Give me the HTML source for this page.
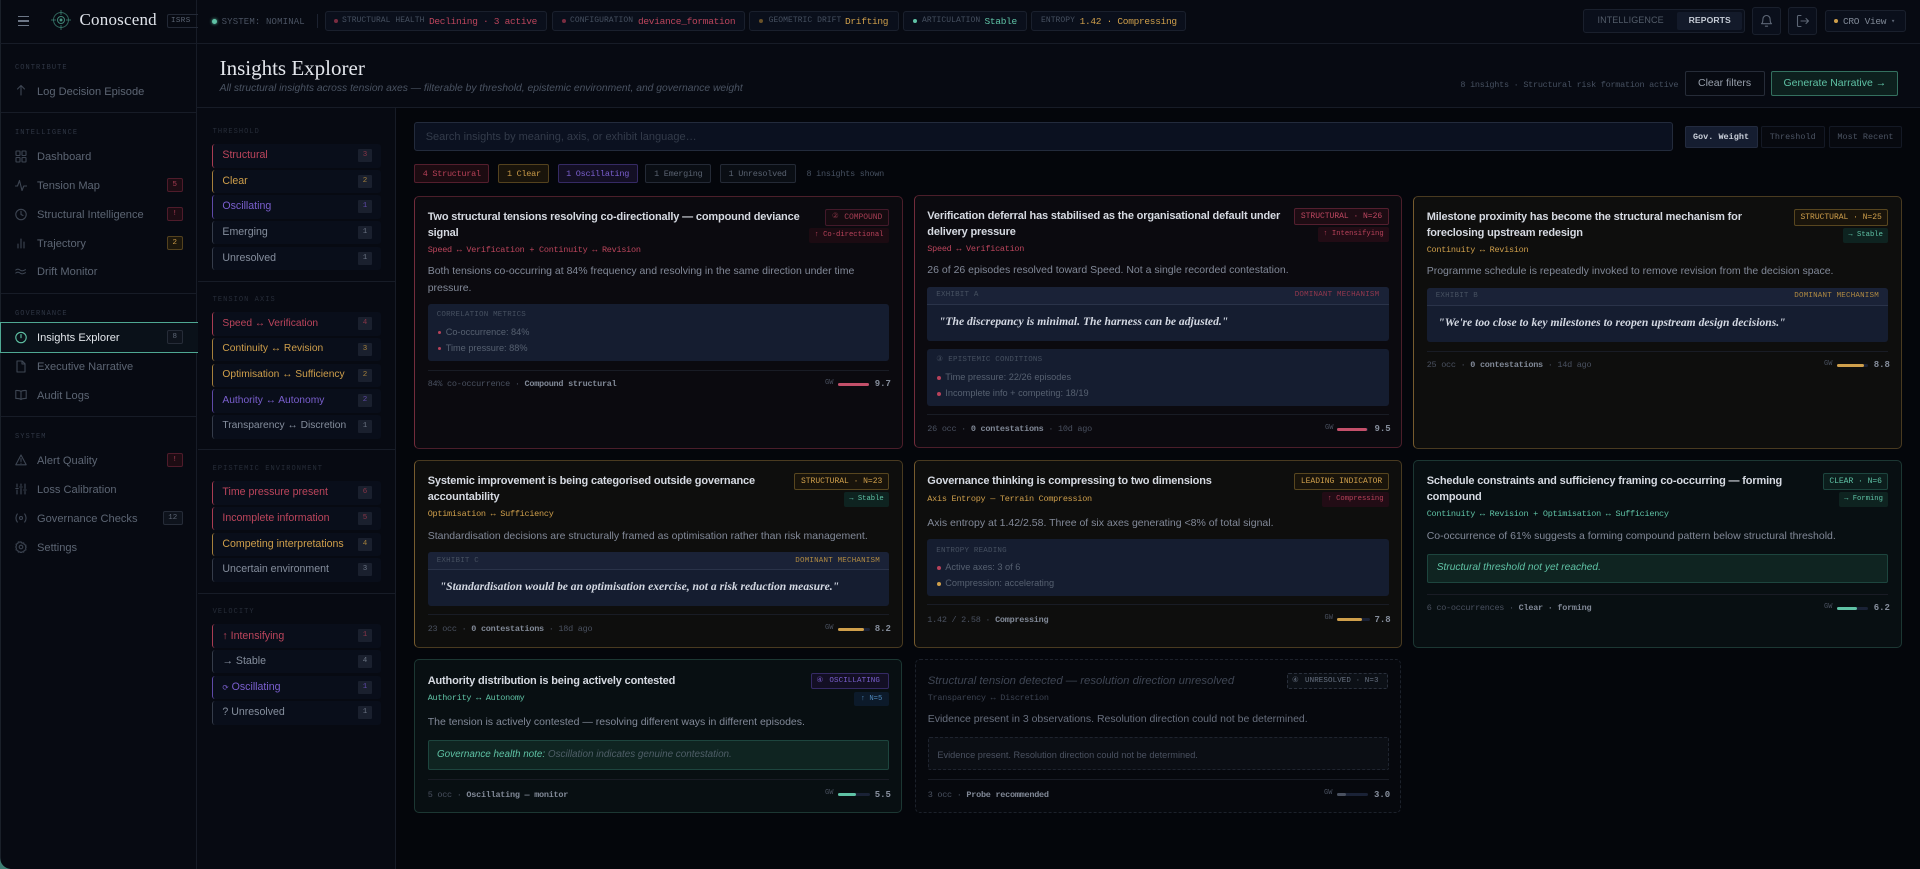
<!DOCTYPE html>
<html lang="en"><head><meta charset="utf-8"><title>Conoscend — Insights Explorer</title>
<style>
*{box-sizing:border-box;margin:0;padding:0}
html,body{width:1920px;height:869px;overflow:hidden;background:#04060b}
body{position:relative;font-family:"Liberation Sans",sans-serif;color:#8a93a3}
.b{position:absolute}
.t{position:absolute;line-height:0;white-space:nowrap}
.m{font-family:"Liberation Mono",monospace;font-size:8.5px;letter-spacing:-.26px;margin-top:1px}
.s{font-family:"Liberation Serif",serif}
.sec{font-family:"Liberation Mono",monospace;font-size:7px;letter-spacing:1.06px;color:#2f3644}
.nav{font-size:11.1px;color:#5c6573;left:37px;margin-top:.7px}
svg.i{position:absolute;fill:none;stroke:#3d4552;stroke-width:1.1;stroke-linecap:round;stroke-linejoin:round}
.nb{position:absolute;left:167px;width:15.5px;height:14px;border-radius:2px;font:7.5px/12px "Liberation Mono",monospace;text-align:center}
.nr{background:#1d0c13;border:1px solid #4f1c2b;color:#a83c52}
.na{background:#1c170c;border:1px solid #54421e;color:#c99a48}
.nn{background:#0e131c;border:1px solid #262c38;color:#5d6675}
.pill{position:absolute;top:11px;height:20px;background:#0a0f1b;border:1px solid #1a202d;border-radius:3px}
.dot{position:absolute;width:4px;height:4px;border-radius:50%}
.pl{font-family:"Liberation Mono",monospace;font-size:8px;letter-spacing:.05px;color:#465060;margin-top:.5px}
.pv{font-family:"Liberation Mono",monospace;font-size:9.5px;letter-spacing:-.3px;margin-top:.5px}
.fi{position:absolute;left:212px;width:168.5px;height:23.5px;background:#090e1a;border-left:1.5px solid;border-radius:3px}
.fl{left:222.4px;font-size:10.6px}
.fx{font-size:10.25px}
.fc{position:absolute;left:358px;width:14px;height:13px;background:#1a202e;border-radius:1px;font:7.5px/13px "Liberation Mono",monospace;text-align:center}
.r{color:#bc455c}.a{color:#cf9f4b}.v{color:#7a5fce}.n{color:#858e9d}.g{color:#5fc2a5}
.ch{position:absolute;top:163.5px;height:19.5px;border:1px solid;border-radius:2px;font:8.5px/18px "Liberation Mono",monospace;letter-spacing:-.26px;text-align:center}
.sb{position:absolute;top:125.5px;height:22.5px;border:1px solid #141925;border-radius:2px;background:#07090f;color:#4c5463;font:8.5px/20.5px "Liberation Mono",monospace;text-align:center}
.c{position:absolute;border:1px solid;border-radius:5px}
.cr{background:#0b0a0f;border-color:rgba(201,74,98,.34);border-left-color:rgba(201,74,98,.55)}
.ca{background:#0e0e0d;border-color:rgba(214,164,78,.30);border-left-color:rgba(214,164,78,.52)}
.cg{background:#080f12;border-color:rgba(99,199,169,.22)}
.cd{background:#06080d;border:1px dashed #1c212b}
.ti{font-size:11px;font-weight:700;letter-spacing:-.16px;color:#d6dae2;margin-top:.5px}
.bo{font-size:10.5px;color:#828998}
.bd{position:absolute;height:17px;border:1px solid;border-radius:2px;font:8px/15px "Liberation Mono",monospace;letter-spacing:-.02px;text-align:center;white-space:nowrap}
.bdr{background:#1d0c13;border-color:#541f2f;color:#bd4660}
.bda{background:#19140b;border-color:#58461f;color:#cf9f4b}
.bdg{background:#0c1e1d;border-color:#1d453e;color:#5fc2a5}
.ve{position:absolute;height:15px;border-radius:2px;font:7.2px/15px "Liberation Mono",monospace;text-align:center;white-space:nowrap}
.ver{background:#220c15;color:#b8425a}
.veg{background:#0e2320;color:#5fc2a5}
.pa{position:absolute;background:#151d30;border-radius:3px}
.ph{position:absolute;background:#1a2237;border-bottom:1px solid #2a3349;border-radius:3px 3px 0 0}
.lb{font-family:"Liberation Mono",monospace;font-size:7.5px;letter-spacing:.2px;color:#465060;margin-top:.7px}
.li{font-size:9.2px;color:#566070;margin-top:1.2px}
.qu{font-family:"Liberation Serif",serif;font-style:italic;font-size:11.6px;color:#d3d8e2;font-weight:700}
.dv{position:absolute;height:1px;background:#191c25}
.fo{font-family:"Liberation Mono",monospace;font-size:8.5px;letter-spacing:-.26px;color:#4a5160;margin-top:1.2px}
.fo b{color:#818997}
.gw{font-family:"Liberation Mono",monospace;font-size:7px;color:#4a5160;margin-top:.5px}
.bar{position:absolute;width:31px;height:3px;background:#1a2236;border-radius:2px;margin-top:.5px}
.bar i{display:block;height:3px;border-radius:2px}
.val{font-family:"Liberation Mono",monospace;font-size:9px;font-weight:700;color:#858d9b;margin-top:.5px}
.bul{position:absolute;width:3px;height:3px;border-radius:50%;margin-top:1px}
.note{position:absolute;background:#0f2421;border:1px solid #1d453e;border-radius:2px}
</style></head><body>

<!-- base panels -->
<div class="b" style="left:0;top:0;width:197px;height:869px;background:#070a12;border-right:1px solid #171c27;border-left:1px solid #1a2029"></div>
<div class="b" style="left:197px;top:0;width:1723px;height:43px;background:#070a12"></div>
<div class="b" style="left:197px;top:44px;width:1723px;height:63px;background:#070a12"></div>
<div class="b" style="left:0;top:43px;width:1920px;height:1px;background:#171c27"></div>
<div class="b" style="left:197px;top:107px;width:1723px;height:1px;background:#171c27"></div>
<div class="b" style="left:197px;top:108px;width:199px;height:761px;background:#070a12;border-right:1px solid #171c27"></div>
<svg class="b" style="left:0;top:857px" width="12" height="12" viewBox="0 0 12 12"><path d="M0 0C0 7 5 12 12 12H0Z" fill="#3d7d72"/></svg>

<!-- header -->
<div class="b" style="left:17.5px;top:16px;width:11.5px;height:1.2px;background:#6d7787"></div>
<div class="b" style="left:17.5px;top:20.4px;width:11.5px;height:1.2px;background:#6d7787"></div>
<div class="b" style="left:17.5px;top:24.8px;width:11.5px;height:1.2px;background:#6d7787"></div>
<svg class="b" style="left:50px;top:9px" width="22" height="22" viewBox="0 0 22 22" fill="none" stroke="#3f8575" stroke-width="1"><circle cx="11" cy="11" r="7.5" opacity=".75"/><circle cx="11" cy="11" r="3.5"/><circle cx="11" cy="11" r="1" fill="#5fc2a5"/><path d="M11 1v5M11 16v5M1 11h5M16 11h5" opacity=".75"/></svg>
<span class="t s" style="left:79.5px;top:20px;font-size:17px;letter-spacing:.2px;color:#dfe3ea">Conoscend</span>
<div class="b" style="left:166.5px;top:14px;width:31px;height:13.5px;border:1px solid #232936;border-right:0;border-radius:2px 0 0 2px"></div>
<span class="t m" style="left:171px;top:20px;font-size:7.5px;letter-spacing:.4px;color:#5d6675">ISRS</span>
<div class="dot" style="left:212px;top:19px;width:5px;height:5px;background:#5fc2a5;box-shadow:0 0 3px #5fc2a5"></div>
<span class="t m" style="left:221.6px;top:20.5px;font-size:9px;letter-spacing:.15px;color:#4a5362">SYSTEM: NOMINAL</span>
<div class="b" style="left:317px;top:14px;width:1px;height:14px;background:#1c2230"></div>

<div class="pill" style="left:324.5px;width:222px"></div>
<div class="dot" style="left:334px;top:19px;background:#7a2c40"></div>
<span class="t pl" style="left:342px;top:20.5px">STRUCTURAL HEALTH</span>
<span class="t pv r" style="left:429px;top:21px">Declining · 3 active</span>

<div class="pill" style="left:552px;width:192.5px"></div>
<div class="dot" style="left:561.7px;top:19px;background:#7a2c40"></div>
<span class="t pl" style="left:570px;top:20.5px">CONFIGURATION</span>
<span class="t pv r" style="left:638px;top:21px">deviance_formation</span>

<div class="pill" style="left:749px;width:150px"></div>
<div class="dot" style="left:759px;top:19px;background:#6a5228"></div>
<span class="t pl" style="left:768.6px;top:20.5px">GEOMETRIC DRIFT</span>
<span class="t pv a" style="left:845px;top:21px">Drifting</span>

<div class="pill" style="left:903px;width:123.5px"></div>
<div class="dot" style="left:913px;top:19px;background:#5fc2a5"></div>
<span class="t pl" style="left:922px;top:20.5px">ARTICULATION</span>
<span class="t pv g" style="left:984.5px;top:21px">Stable</span>

<div class="pill" style="left:1031.4px;width:155px"></div>
<span class="t pl" style="left:1041px;top:20.5px">ENTROPY</span>
<span class="t pv a" style="left:1079.6px;top:21px">1.42 · Compressing</span>

<div class="b" style="left:1583px;top:9px;width:161.5px;height:24px;background:#0a0f1b;border:1px solid #1a202d;border-radius:3px"></div>
<div class="b" style="left:1677px;top:12px;width:65px;height:18px;background:#131a2a;border-radius:2px"></div>
<span class="t" style="left:1597.5px;top:20px;font-size:9px;letter-spacing:.1px;color:#535c69">INTELLIGENCE</span>
<span class="t" style="left:1688.6px;top:20px;font-size:8.6px;font-weight:700;letter-spacing:.1px;color:#c5cbd5">REPORTS</span>

<div class="b" style="left:1752px;top:7px;width:29px;height:28px;background:#0a0f1b;border:1px solid #1a202d;border-radius:3px"></div>
<svg class="i" style="left:1760px;top:14px;stroke:#5d6675" width="13" height="14" viewBox="0 0 13 14"><path d="M6.5 1.5a3.6 3.6 0 0 0-3.6 3.6c0 3.6-1.4 4.6-1.4 4.6h10s-1.4-1-1.4-4.6A3.6 3.6 0 0 0 6.5 1.5ZM5.4 12.2h2.2"/></svg>
<div class="b" style="left:1788px;top:7px;width:29px;height:28px;background:#0a0f1b;border:1px solid #1a202d;border-radius:3px"></div>
<svg class="i" style="left:1796px;top:14px;stroke:#5d6675" width="14" height="14" viewBox="0 0 14 14"><path d="M5 1.5H2.5a1 1 0 0 0-1 1v9a1 1 0 0 0 1 1H5M5 7h7.500M10 4.500 12.500 7 10 9.500"/></svg>
<div class="b" style="left:1824.5px;top:10px;width:81px;height:22px;background:#0a0f1b;border:1px solid #1a202d;border-radius:3px"></div>
<div class="dot" style="left:1834px;top:19px;background:#cf9f4b"></div>
<span class="t m" style="left:1843px;top:20.5px;font-size:9.5px;letter-spacing:-.3px;color:#7f8896">CRO View</span>
<span class="t m" style="left:1891px;top:20.5px;font-size:7px;letter-spacing:0;color:#5d6675">▾</span>

<!-- sidebar -->
<span class="t sec" style="left:15px;top:67.5px">CONTRIBUTE</span>
<svg class="i" style="left:15px;top:84px" width="12" height="12" viewBox="0 0 12 12"><path d="M6 11V1.500M2.500 5l3.500-3.500L9.500 5"/></svg>
<span class="t nav" style="top:91px">Log Decision Episode</span>
<div class="b" style="left:1px;top:112px;width:196px;height:1px;background:#171c27"></div>

<span class="t sec" style="left:15px;top:133px">INTELLIGENCE</span>
<svg class="i" style="left:15px;top:150px" width="12" height="13" viewBox="0 0 12 13"><rect x="1" y="1" width="4" height="4.500" rx=".5"/><rect x="7" y="1" width="4" height="4.500" rx=".5"/><rect x="1" y="7.500" width="4" height="4.500" rx=".5"/><rect x="7" y="7.500" width="4" height="4.500" rx=".5"/></svg>
<span class="t nav" style="top:156px">Dashboard</span>
<svg class="i" style="left:15px;top:179px" width="12" height="13" viewBox="0 0 12 13"><path d="M.5 7h2l2-5.500 2.500 10 1.800-4.500h3"/></svg>
<span class="t nav" style="top:185px">Tension Map</span>
<div class="nb nr" style="top:178px">5</div>
<svg class="i" style="left:15px;top:208px" width="12" height="13" viewBox="0 0 12 13"><circle cx="6" cy="6.500" r="5.200"/><path d="M6 3.200v3.300l2 1"/></svg>
<span class="t nav" style="top:214px">Structural Intelligence</span>
<div class="nb nr" style="top:207px">!</div>
<svg class="i" style="left:15px;top:237px" width="12" height="13" viewBox="0 0 12 13"><path d="M3 11V7M6 11V2M9 11V5"/></svg>
<span class="t nav" style="top:243px">Trajectory</span>
<div class="nb na" style="top:236px">2</div>
<svg class="i" style="left:15px;top:265px" width="12" height="13" viewBox="0 0 12 13"><path d="M.8 5c1.500-1.200 2.700-1.200 4.200 0s2.700 1.200 5.500-.3M.8 8c1.500-1.200 2.700-1.200 4.200 0s2.700 1.200 5.500-.3"/></svg>
<span class="t nav" style="top:271px">Drift Monitor</span>
<div class="b" style="left:1px;top:293px;width:196px;height:1px;background:#171c27"></div>

<span class="t sec" style="left:15px;top:313.700px">GOVERNANCE</span>
<div class="b" style="left:0;top:322px;width:197.500px;height:30.500px;background:#0a1119;border:1px solid #4fa893;border-right:0"></div>
<svg class="i" style="left:15px;top:331px;stroke:#5fc2a5" width="12" height="13" viewBox="0 0 12 13"><circle cx="6" cy="6.500" r="5.200"/><path d="M6 3.500v3.200"/></svg>
<span class="t nav" style="top:337.500px;color:#e2e6eb">Insights Explorer</span>
<div class="nb nn" style="top:330px">8</div>
<svg class="i" style="left:15px;top:360px" width="12" height="13" viewBox="0 0 12 13"><path d="M2 1h5.200L10 3.800V12H2ZM7 1v3h3"/></svg>
<span class="t nav" style="top:366px">Executive Narrative</span>
<svg class="i" style="left:15px;top:389px" width="12" height="12" viewBox="0 0 12 12"><path d="M6 2.500C4.800 1.600 3 1.400.8 1.500v8c2.200-.1 4 .1 5.200 1 1.200-.9 3-1.100 5.200-1v-8C9 1.400 7.200 1.600 6 2.500ZM6 2.500v8"/></svg>
<span class="t nav" style="top:395px">Audit Logs</span>
<div class="b" style="left:1px;top:416px;width:196px;height:1px;background:#171c27"></div>

<span class="t sec" style="left:15px;top:437px">SYSTEM</span>
<svg class="i" style="left:15px;top:454px" width="12" height="12" viewBox="0 0 12 12"><path d="M6 1 .8 10.800h10.400ZM6 4.500v3M6 9.200v.1"/></svg>
<span class="t nav" style="top:460px">Alert Quality</span>
<div class="nb nr" style="top:453px">!</div>
<svg class="i" style="left:15px;top:483px" width="12" height="12" viewBox="0 0 12 12"><path d="M2 1v3M2 7v4M6 1v1.500M6 5.500V11M10 1v4.500M10 8.500V11M.8 5.500h2.400M4.800 4h2.400M8.800 7h2.400"/></svg>
<span class="t nav" style="top:489px">Loss Calibration</span>
<svg class="i" style="left:15px;top:512px" width="12" height="12" viewBox="0 0 12 12"><circle cx="6" cy="6" r="1.500"/><path d="M2.300 2C.5 4.400.5 7.600 2.300 10M9.700 2c1.800 2.400 1.800 5.600 0 8"/></svg>
<span class="t nav" style="top:518px">Governance Checks</span>
<div class="nb nn" style="top:511px;left:163px;width:19.500px">12</div>
<svg class="i" style="left:15px;top:541px" width="12" height="12" viewBox="0 0 12 12"><circle cx="6" cy="6" r="1.800"/><path d="M6 .8l1 1.400 1.700-.3.500 1.700 1.700.5-.3 1.700L11.200 6l-.6 1.200.3 1.700-1.700.5-.5 1.700-1.700-.3-1 1.400-1-1.400-1.700.3-.5-1.700-1.700-.5.300-1.700L.800 6l.6-1.200-.3-1.700 1.700-.5.500-1.700 1.700.3Z"/></svg>
<span class="t nav" style="top:547px">Settings</span>

<!-- page head -->
<span class="t s" style="left:219.600px;top:67.500px;font-size:21px;color:#e3e6ec">Insights Explorer</span>
<span class="t" style="left:219.600px;top:88.700px;font-size:10.300px;font-style:italic;color:#4a5362">All structural insights across tension axes — filterable by threshold, epistemic environment, and governance weight</span>
<span class="t m" style="left:1460.400px;top:84.300px;color:#465060">8 insights · Structural risk formation active</span>
<div class="b" style="left:1685px;top:70.800px;width:79.500px;height:25.500px;background:#070a11;border:1px solid #262c38;border-radius:2px"></div>
<span class="t" style="left:1698px;top:82.700px;font-size:10.500px;color:#98a0ac">Clear filters</span>
<div class="b" style="left:1771.400px;top:70.800px;width:126.200px;height:25.500px;background:#0d201e;border:1px solid #34705f;border-radius:2px"></div>
<span class="t g" style="left:1783.500px;top:82.700px;font-size:10.500px">Generate Narrative →</span>

<!-- filters -->
<span class="t sec" style="left:212.600px;top:131.700px;color:#272d39">THRESHOLD</span>
<div class="fi" style="top:144px;border-color:#a83c52"></div><span class="t fl r" style="top:155px">Structural</span><div class="fc r" style="top:149px;color:#8a3548">3</div>
<div class="fi" style="top:169.500px;border-color:#a5803c"></div><span class="t fl a" style="top:180.700px">Clear</span><div class="fc" style="top:174.500px;color:#a5803c">2</div>
<div class="fi" style="top:195.300px;border-color:#5f4aa8"></div><span class="t fl v" style="top:205.800px">Oscillating</span><div class="fc" style="top:200.300px;color:#5f4aa8">1</div>
<div class="fi" style="top:220.800px;border-color:#353c4a"></div><span class="t fl n" style="top:231.800px">Emerging</span><div class="fc" style="top:225.800px;color:#6a7383">1</div>
<div class="fi" style="top:246.500px;border-color:#353c4a"></div><span class="t fl n" style="top:257.700px">Unresolved</span><div class="fc" style="top:251.500px;color:#6a7383">1</div>
<div class="b" style="left:198px;top:281px;width:197px;height:1px;background:#171c27"></div>

<span class="t sec" style="left:212.600px;top:300.300px;color:#272d39">TENSION AXIS</span>
<div class="fi" style="top:312px;border-color:#a83c52"></div><span class="t fl fx r" style="top:323.700px">Speed ↔ Verification</span><div class="fc" style="top:317px;color:#8a3548">4</div>
<div class="fi" style="top:337.700px;border-color:#a5803c"></div><span class="t fl fx a" style="top:348.700px">Continuity ↔ Revision</span><div class="fc" style="top:342.700px;color:#a5803c">3</div>
<div class="fi" style="top:363.500px;border-color:#a5803c"></div><span class="t fl fx a" style="top:374.700px">Optimisation ↔ Sufficiency</span><div class="fc" style="top:368.500px;color:#a5803c">2</div>
<div class="fi" style="top:389.200px;border-color:#5f4aa8"></div><span class="t fl fx v" style="top:400.700px">Authority ↔ Autonomy</span><div class="fc" style="top:394.200px;color:#5f4aa8">2</div>
<div class="fi" style="top:415px;border-color:#353c4a"></div><span class="t fl fx n" style="top:425.700px">Transparency ↔ Discretion</span><div class="fc" style="top:420px;color:#6a7383">1</div>
<div class="b" style="left:198px;top:449px;width:197px;height:1px;background:#171c27"></div>

<span class="t sec" style="left:212.600px;top:469.300px;color:#272d39">EPISTEMIC ENVIRONMENT</span>
<div class="fi" style="top:481px;border-color:#a83c52"></div><span class="t fl r" style="top:491.700px">Time pressure present</span><div class="fc" style="top:486px;color:#8a3548">6</div>
<div class="fi" style="top:506.700px;border-color:#a83c52"></div><span class="t fl r" style="top:517.700px">Incomplete information</span><div class="fc" style="top:511.700px;color:#8a3548">5</div>
<div class="fi" style="top:532.500px;border-color:#a5803c"></div><span class="t fl a" style="top:543.700px">Competing interpretations</span><div class="fc" style="top:537.500px;color:#a5803c">4</div>
<div class="fi" style="top:558.200px;border-color:#353c4a"></div><span class="t fl n" style="top:568.700px">Uncertain environment</span><div class="fc" style="top:563.200px;color:#6a7383">3</div>
<div class="b" style="left:198px;top:593px;width:197px;height:1px;background:#171c27"></div>

<span class="t sec" style="left:212.600px;top:612.300px;color:#272d39">VELOCITY</span>
<div class="fi" style="top:624px;border-color:#a83c52"></div><span class="t fl r" style="top:635.700px">↑ Intensifying</span><div class="fc" style="top:629px;color:#8a3548">1</div>
<div class="fi" style="top:649.700px;border-color:#353c4a"></div><span class="t fl n" style="top:660.700px">→ Stable</span><div class="fc" style="top:654.700px;color:#6a7383">4</div>
<div class="fi" style="top:675.500px;border-color:#5f4aa8"></div><span class="t fl v" style="top:686.700px"><span style="font-size:7.500px">⟳</span> Oscillating</span><div class="fc" style="top:680.500px;color:#5f4aa8">1</div>
<div class="fi" style="top:701.200px;border-color:#353c4a"></div><span class="t fl n" style="top:711.700px">? Unresolved</span><div class="fc" style="top:706.200px;color:#6a7383">1</div>

<!-- search + sort -->
<div class="b" style="left:414.300px;top:122.300px;width:1259.200px;height:28.500px;background:#0b1120;border:1px solid #232b3c;border-radius:3px"></div>
<span class="t" style="left:425.700px;top:136.500px;font-size:11px;color:#333b4a">Search insights by meaning, axis, or exhibit language…</span>
<div class="sb" style="left:1684.500px;width:73px;background:#151d30;border-color:#232b3f;color:#c9cfd9;font-weight:700">Gov. Weight</div>
<div class="sb" style="left:1761px;width:63.500px">Threshold</div>
<div class="sb" style="left:1829.400px;width:72.200px">Most Recent</div>

<!-- chips -->
<div class="ch" style="left:414.300px;width:75px;background:#1c0b11;border-color:#541e2d;color:#b64057">4 Structural</div>
<div class="ch" style="left:498.400px;width:51px;background:#19140b;border-color:#54421e;color:#c99a48">1 Clear</div>
<div class="ch" style="left:557.600px;width:80px;background:#130f24;border-color:#352a64;color:#7a5fce">1 Oscillating</div>
<div class="ch" style="left:645.300px;width:66px;background:#0a0e14;border-color:#242a36;color:#596270">1 Emerging</div>
<div class="ch" style="left:719.600px;width:76px;background:#0a0e14;border-color:#242a36;color:#596270">1 Unresolved</div>
<span class="t m" style="left:806.500px;top:172.500px;color:#465060">8 insights shown</span>

<!-- Card 1 -->
<div class="c cr" style="left:414.300px;top:196px;width:488.400px;height:252.700px"></div>
<span class="t ti" style="left:427.700px;top:216.300px">Two structural tensions resolving co-directionally — compound deviance</span>
<span class="t ti" style="left:427.700px;top:232.300px">signal</span>
<div class="bd bdr" style="left:825px;top:209px;width:64px;background:#150b10;border-color:#43192a"></div>
<span class="t m" style="left:832px;top:216.300px;font-size:7.500px;letter-spacing:0;color:#8f3749">②</span>
<span class="t m" style="left:844.300px;top:216.500px;font-size:8px;letter-spacing:-.05px;color:#a33d52">COMPOUND</span>
<div class="ve ver" style="left:809px;top:228px;width:80px;background:#1c0b12">↑ Co-directional</div>
<span class="t m r" style="left:427.700px;top:249px">Speed ↔ Verification + Continuity ↔ Revision</span>
<span class="t bo" style="left:427.700px;top:270.700px">Both tensions co-occurring at 84% frequency and resolving in the same direction under time</span>
<span class="t bo" style="left:427.700px;top:287.700px">pressure.</span>
<div class="pa" style="left:427.700px;top:304px;width:461.300px;height:57px"></div>
<span class="t lb" style="left:436.700px;top:314.300px">CORRELATION METRICS</span>
<div class="bul" style="left:437.500px;top:330px;background:#b8425a"></div><span class="t li" style="left:445.700px;top:331px">Co-occurrence: 84%</span>
<div class="bul" style="left:437.500px;top:346px;background:#b8425a"></div><span class="t li" style="left:445.700px;top:347px">Time pressure: 88%</span>
<div class="dv" style="left:427.700px;top:369.500px;width:461.300px"></div>
<span class="t fo" style="left:427.700px;top:383.300px">84% co-occurrence · <b>Compound structural</b></span>
<span class="t gw" style="left:825px;top:382.700px">GW</span>
<div class="bar" style="left:838px;top:382px"><i style="width:100%;background:#c4506a"></i></div>
<span class="t val" style="left:874.700px;top:383.300px">9.7</span>

<!-- Card 2 -->
<div class="c cr" style="left:914px;top:195px;width:488px;height:252.700px"></div>
<span class="t ti" style="left:927.300px;top:215.300px">Verification deferral has stabilised as the organisational default under</span>
<span class="t ti" style="left:927.300px;top:231.300px">delivery pressure</span>
<div class="bd bdr" style="left:1294px;top:208.300px;width:95px">STRUCTURAL · N=26</div>
<div class="ve ver" style="left:1318px;top:227px;width:71px">↑ Intensifying</div>
<span class="t m r" style="left:927.300px;top:248.300px">Speed ↔ Verification</span>
<span class="t bo" style="left:927.300px;top:269.700px">26 of 26 episodes resolved toward Speed. Not a single recorded contestation.</span>
<div class="pa" style="left:927.300px;top:287px;width:461.700px;height:54px"></div>
<div class="ph" style="left:927.300px;top:287px;width:461.700px;height:18px"></div>
<span class="t lb" style="left:936.300px;top:294.700px">EXHIBIT A</span>
<span class="t lb" style="left:1294.700px;top:294.700px;color:#93384e">DOMINANT MECHANISM</span>
<span class="t qu" style="left:939px;top:322.300px">"The discrepancy is minimal. The harness can be adjusted."</span>
<div class="pa" style="left:927.300px;top:349px;width:461.700px;height:57px"></div>
<span class="t lb" style="left:936.300px;top:359.700px;letter-spacing:0">③</span>
<span class="t lb" style="left:948.300px;top:359.700px">EPISTEMIC CONDITIONS</span>
<div class="bul" style="left:936.500px;top:375px;width:4px;height:4px;background:#b8425a"></div><span class="t li" style="left:945.300px;top:376px">Time pressure: 22/26 episodes</span>
<div class="bul" style="left:936.500px;top:391px;width:4px;height:4px;background:#b8425a"></div><span class="t li" style="left:945.300px;top:392px">Incomplete info + competing: 18/19</span>
<div class="dv" style="left:927.300px;top:414px;width:461.700px"></div>
<span class="t fo" style="left:927.300px;top:428.300px">26 occ · <b>0 contestations</b> · 10d ago</span>
<span class="t gw" style="left:1325px;top:427.500px">GW</span>
<div class="bar" style="left:1337px;top:427px"><i style="width:96%;background:#c4506a"></i></div>
<span class="t val" style="left:1374.500px;top:428.300px">9.5</span>

<!-- Card 3 -->
<div class="c ca" style="left:1413.300px;top:196px;width:488.400px;height:252.700px"></div>
<span class="t ti" style="left:1426.700px;top:216.300px">Milestone proximity has become the structural mechanism for</span>
<span class="t ti" style="left:1426.700px;top:232.300px">foreclosing upstream redesign</span>
<div class="bd bda" style="left:1794.300px;top:209px;width:93.700px">STRUCTURAL · N=25</div>
<div class="ve veg" style="left:1843.300px;top:228px;width:44.700px">→ Stable</div>
<span class="t m a" style="left:1426.700px;top:249px">Continuity ↔ Revision</span>
<span class="t bo" style="left:1426.700px;top:270.700px">Programme schedule is repeatedly invoked to remove revision from the decision space.</span>
<div class="pa" style="left:1426.700px;top:288px;width:461.300px;height:54px"></div>
<div class="ph" style="left:1426.700px;top:288px;width:461.300px;height:18px"></div>
<span class="t lb" style="left:1435.700px;top:295.700px">EXHIBIT B</span>
<span class="t lb" style="left:1794.300px;top:295.700px;color:#b08a42">DOMINANT MECHANISM</span>
<span class="t qu" style="left:1438.300px;top:323.300px">"We're too close to key milestones to reopen upstream design decisions."</span>
<div class="dv" style="left:1426.700px;top:350.500px;width:461.300px"></div>
<span class="t fo" style="left:1426.700px;top:364.300px">25 occ · <b>0 contestations</b> · 14d ago</span>
<span class="t gw" style="left:1824px;top:363.500px">GW</span>
<div class="bar" style="left:1837px;top:363px"><i style="width:87%;background:#cf9f4b"></i></div>
<span class="t val" style="left:1873.700px;top:364.300px">8.8</span>

<!-- Card 4 -->
<div class="c ca" style="left:414.300px;top:460px;width:488.400px;height:187.700px"></div>
<span class="t ti" style="left:427.700px;top:480.300px">Systemic improvement is being categorised outside governance</span>
<span class="t ti" style="left:427.700px;top:496.300px">accountability</span>
<div class="bd bda" style="left:794.300px;top:473px;width:94.700px">STRUCTURAL · N=23</div>
<div class="ve veg" style="left:844px;top:492px;width:45px">→ Stable</div>
<span class="t m a" style="left:427.700px;top:513.300px">Optimisation ↔ Sufficiency</span>
<span class="t bo" style="left:427.700px;top:535.700px">Standardisation decisions are structurally framed as optimisation rather than risk management.</span>
<div class="pa" style="left:427.700px;top:552px;width:461.300px;height:54px"></div>
<div class="ph" style="left:427.700px;top:552px;width:461.300px;height:18px"></div>
<span class="t lb" style="left:436.700px;top:560.700px">EXHIBIT C</span>
<span class="t lb" style="left:795.300px;top:560.700px;color:#b08a42">DOMINANT MECHANISM</span>
<span class="t qu" style="left:439.700px;top:587.300px">"Standardisation would be an optimisation exercise, not a risk reduction measure."</span>
<div class="dv" style="left:427.700px;top:614px;width:461.300px"></div>
<span class="t fo" style="left:427.700px;top:628.300px">23 occ · <b>0 contestations</b> · 18d ago</span>
<span class="t gw" style="left:825px;top:627.500px">GW</span>
<div class="bar" style="left:838px;top:627px;width:32px"><i style="width:82%;background:#cf9f4b"></i></div>
<span class="t val" style="left:874.700px;top:628.300px">8.2</span>

<!-- Card 5 -->
<div class="c ca" style="left:914px;top:460px;width:488px;height:187.700px"></div>
<span class="t ti" style="left:927.300px;top:480.300px">Governance thinking is compressing to two dimensions</span>
<div class="bd bda" style="left:1294px;top:473px;width:95px">LEADING INDICATOR</div>
<div class="ve ver" style="left:1322px;top:492px;width:67px">↑ Compressing</div>
<span class="t m a" style="left:927.300px;top:498px">Axis Entropy — Terrain Compression</span>
<span class="t bo" style="left:927.300px;top:522.700px">Axis entropy at 1.42/2.58. Three of six axes generating &lt;8% of total signal.</span>
<div class="pa" style="left:927.300px;top:539px;width:461.700px;height:56.700px"></div>
<span class="t lb" style="left:936.300px;top:550.700px">ENTROPY READING</span>
<div class="bul" style="left:936.500px;top:565px;width:4px;height:4px;background:#b8425a"></div><span class="t li" style="left:945.300px;top:566px">Active axes: 3 of 6</span>
<div class="bul" style="left:936.500px;top:581px;width:4px;height:4px;background:#cf9f4b"></div><span class="t li" style="left:945.300px;top:582px">Compression: accelerating</span>
<div class="dv" style="left:927.300px;top:604px;width:461.700px"></div>
<span class="t fo" style="left:927.300px;top:619px">1.42 / 2.58 · <b>Compressing</b></span>
<span class="t gw" style="left:1324.500px;top:617.500px">GW</span>
<div class="bar" style="left:1337px;top:617px;width:32.500px"><i style="width:78%;background:#cf9f4b"></i></div>
<span class="t val" style="left:1374.500px;top:619px">7.8</span>

<!-- Card 6 -->
<div class="c cg" style="left:1413.300px;top:460px;width:488.400px;height:187.700px"></div>
<span class="t ti" style="left:1426.700px;top:480.300px">Schedule constraints and sufficiency framing co-occurring — forming</span>
<span class="t ti" style="left:1426.700px;top:496.300px">compound</span>
<div class="bd bdg" style="left:1823.300px;top:473px;width:64.700px">CLEAR · N=6</div>
<div class="ve veg" style="left:1839px;top:492px;width:49px">→ Forming</div>
<span class="t m g" style="left:1426.700px;top:513.300px">Continuity ↔ Revision + Optimisation ↔ Sufficiency</span>
<span class="t bo" style="left:1426.700px;top:535.700px">Co-occurrence of 61% suggests a forming compound pattern below structural threshold.</span>
<div class="note" style="left:1426.700px;top:554px;width:461.300px;height:28.700px"></div>
<span class="t g" style="left:1436.700px;top:568px;font-size:10.200px;font-style:italic">Structural threshold not yet reached.</span>
<div class="dv" style="left:1426.700px;top:593.500px;width:461.300px"></div>
<span class="t fo" style="left:1426.700px;top:607.300px">6 co-occurrences · <b>Clear · forming</b></span>
<span class="t gw" style="left:1824px;top:606.500px">GW</span>
<div class="bar" style="left:1837px;top:606px"><i style="width:64%;background:#5fc2a5"></i></div>
<span class="t val" style="left:1873.700px;top:607.300px">6.2</span>

<!-- Card 7 -->
<div class="c cg" style="left:414.300px;top:659.300px;width:488px;height:153.400px"></div>
<span class="t ti" style="left:427.700px;top:680.300px">Authority distribution is being actively contested</span>
<div class="bd" style="left:811px;top:673.300px;width:77.600px;height:16px;background:#130f24;border-color:#352a64"></div>
<span class="t m" style="left:816.500px;top:679.500px;font-size:7.500px;letter-spacing:0;color:#7a5fce">④</span>
<span class="t m" style="left:829.400px;top:680px;font-size:7.500px;letter-spacing:.1px;color:#7a5fce">OSCILLATING</span>
<div class="ve" style="left:854px;top:692px;width:35px;height:14px;line-height:14px;background:#0c1a2a;color:#4d86b8">↑ N=5</div>
<span class="t m g" style="left:427.700px;top:697.300px">Authority ↔ Autonomy</span>
<span class="t bo" style="left:427.700px;top:722px">The tension is actively contested — resolving different ways in different episodes.</span>
<div class="note" style="left:427.700px;top:740px;width:461.300px;height:29.700px"></div>
<span class="t" style="left:437px;top:755px;font-size:9.900px;font-style:italic;color:#4f5e68"><span style="color:#5fc2a5">Governance health note:</span> Oscillation indicates genuine contestation.</span>
<div class="dv" style="left:427.700px;top:779px;width:461.300px"></div>
<span class="t fo" style="left:427.700px;top:794.300px">5 occ · <b>Oscillating — monitor</b></span>
<span class="t gw" style="left:825px;top:792.500px">GW</span>
<div class="bar" style="left:838px;top:792px;width:32px"><i style="width:56%;background:#5fc2a5"></i></div>
<span class="t val" style="left:874.700px;top:794.300px">5.5</span>

<!-- Card 8 -->
<div class="c cd" style="left:914.600px;top:659.300px;width:486px;height:153.400px"></div>
<span class="t" style="left:927.700px;top:680.800px;font-size:11.350px;font-style:italic;color:#3f4654">Structural tension detected — resolution direction unresolved</span>
<div class="bd" style="left:1286.800px;top:673.300px;width:101.500px;height:16px;background:#0c1016;border:1px dashed #2a303c"></div>
<span class="t m" style="left:1292px;top:679.500px;font-size:7.500px;letter-spacing:0;color:#667080">④</span>
<span class="t m" style="left:1305px;top:680px;font-size:7.500px;letter-spacing:.1px;color:#667080">UNRESOLVED · N=3</span>
<span class="t m" style="left:927.700px;top:697.300px;color:#3c4351">Transparency ↔ Discretion</span>
<span class="t bo" style="left:927.700px;top:719px;color:#686f7e">Evidence present in 3 observations. Resolution direction could not be determined.</span>
<div class="b" style="left:927.700px;top:737.300px;width:461px;height:32.400px;background:#0b0e14;border:1px dashed #1f242f;border-radius:2px"></div>
<span class="t li" style="left:937.400px;top:753.500px;color:#4a5160">Evidence present. Resolution direction could not be determined.</span>
<div class="dv" style="left:927.700px;top:779px;width:461px"></div>
<span class="t fo" style="left:927.700px;top:794.300px">3 occ · <b>Probe recommended</b></span>
<span class="t gw" style="left:1324px;top:792.500px">GW</span>
<div class="bar" style="left:1337px;top:792px"><i style="width:30%;background:#4a5160"></i></div>
<span class="t val" style="left:1374px;top:794.300px">3.0</span>

</body></html>
